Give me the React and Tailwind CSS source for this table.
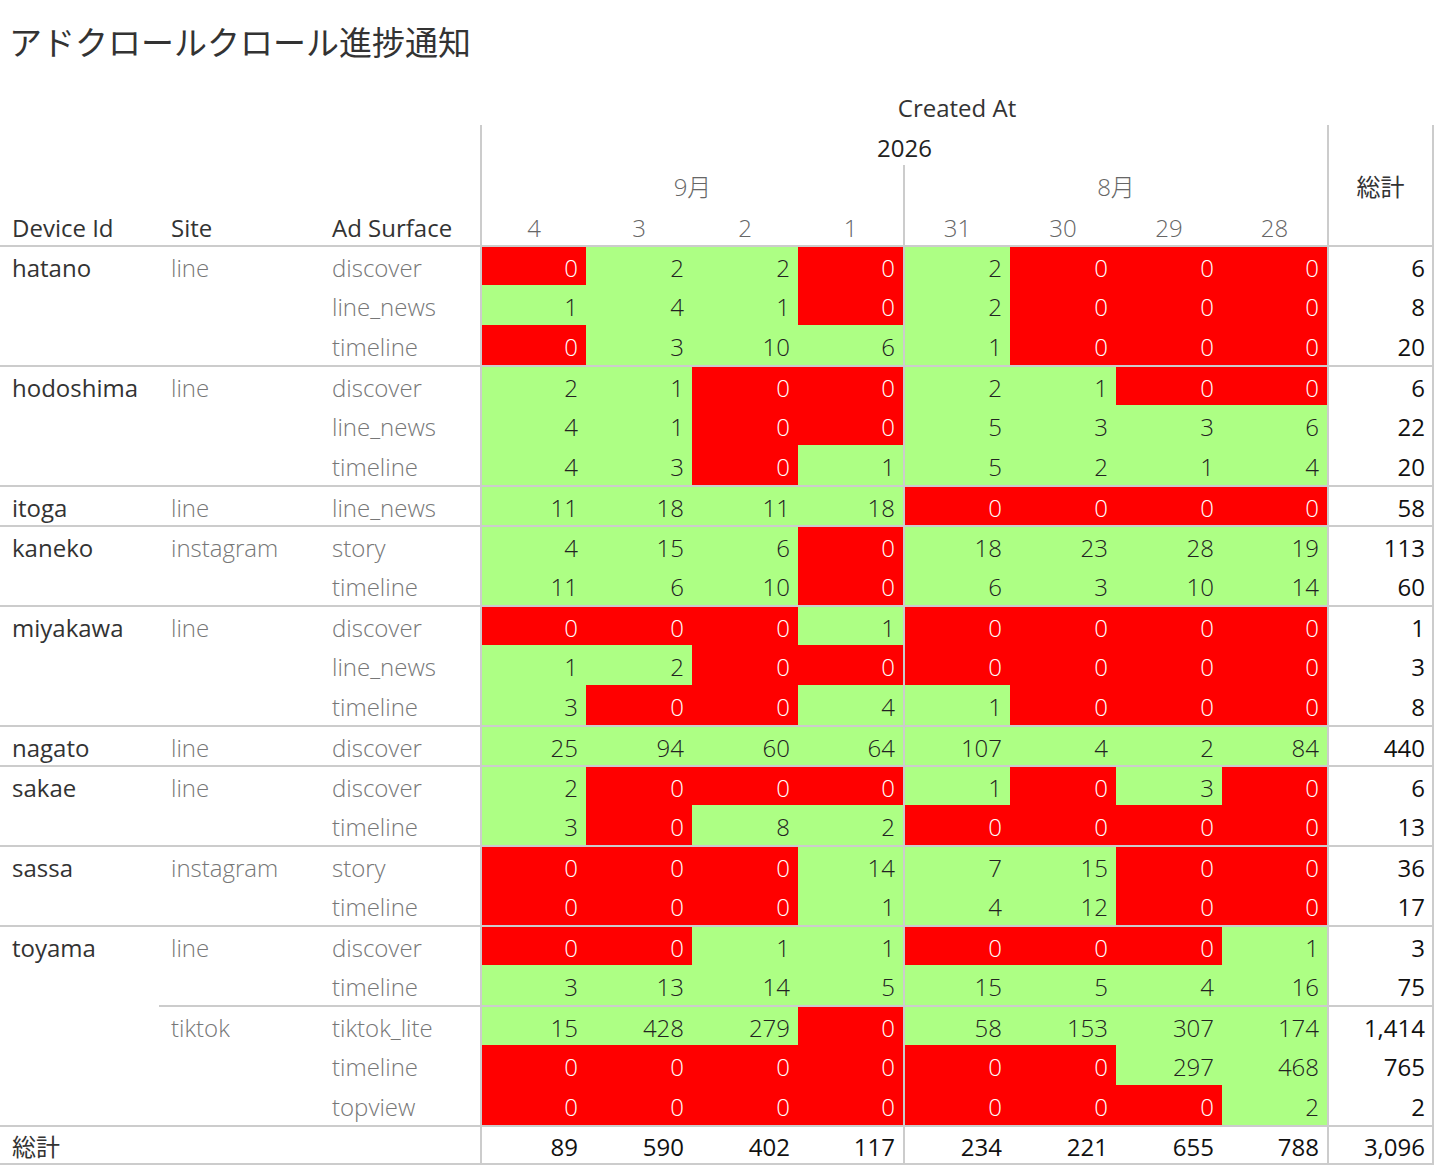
import React from "react";

const groups = [
  { device: "hatano", sites: [{ site: "line", rows: [
    ["discover", [0, 2, 2, 0, 2, 0, 0, 0], "6"],
    ["line_news", [1, 4, 1, 0, 2, 0, 0, 0], "8"],
    ["timeline", [0, 3, 10, 6, 1, 0, 0, 0], "20"],
  ] }] },
  { device: "hodoshima", sites: [{ site: "line", rows: [
    ["discover", [2, 1, 0, 0, 2, 1, 0, 0], "6"],
    ["line_news", [4, 1, 0, 0, 5, 3, 3, 6], "22"],
    ["timeline", [4, 3, 0, 1, 5, 2, 1, 4], "20"],
  ] }] },
  { device: "itoga", sites: [{ site: "line", rows: [
    ["line_news", [11, 18, 11, 18, 0, 0, 0, 0], "58"],
  ] }] },
  { device: "kaneko", sites: [{ site: "instagram", rows: [
    ["story", [4, 15, 6, 0, 18, 23, 28, 19], "113"],
    ["timeline", [11, 6, 10, 0, 6, 3, 10, 14], "60"],
  ] }] },
  { device: "miyakawa", sites: [{ site: "line", rows: [
    ["discover", [0, 0, 0, 1, 0, 0, 0, 0], "1"],
    ["line_news", [1, 2, 0, 0, 0, 0, 0, 0], "3"],
    ["timeline", [3, 0, 0, 4, 1, 0, 0, 0], "8"],
  ] }] },
  { device: "nagato", sites: [{ site: "line", rows: [
    ["discover", [25, 94, 60, 64, 107, 4, 2, 84], "440"],
  ] }] },
  { device: "sakae", sites: [{ site: "line", rows: [
    ["discover", [2, 0, 0, 0, 1, 0, 3, 0], "6"],
    ["timeline", [3, 0, 8, 2, 0, 0, 0, 0], "13"],
  ] }] },
  { device: "sassa", sites: [{ site: "instagram", rows: [
    ["story", [0, 0, 0, 14, 7, 15, 0, 0], "36"],
    ["timeline", [0, 0, 0, 1, 4, 12, 0, 0], "17"],
  ] }] },
  { device: "toyama", sites: [
    { site: "line", rows: [
      ["discover", [0, 0, 1, 1, 0, 0, 0, 1], "3"],
      ["timeline", [3, 13, 14, 5, 15, 5, 4, 16], "75"],
    ] },
    { site: "tiktok", rows: [
      ["tiktok_lite", [15, 428, 279, 0, 58, 153, 307, 174], "1,414"],
      ["timeline", [0, 0, 0, 0, 0, 0, 297, 468], "765"],
      ["topview", [0, 0, 0, 0, 0, 0, 0, 2], "2"],
    ] },
  ] },
];

const days = ["4", "3", "2", "1", "31", "30", "29", "28"];
const totals = ["89", "590", "402", "117", "234", "221", "655", "788"];

// vertical separators: before first data col, before 8月
const dataBorder = (i) => (i === 0 || i === 4 ? "border-l-2" : "");

function buildRows() {
  const out = [];
  groups.forEach((g) => {
    g.sites.forEach((s, si) => {
      s.rows.forEach((r, ri) => {
        out.push({
          device: si === 0 && ri === 0 ? g.device : "",
          site: ri === 0 ? s.site : "",
          surface: r[0],
          values: r[1],
          total: r[2],
          groupStart: si === 0 && ri === 0,
          subStart: si > 0 && ri === 0,
        });
      });
    });
  });
  return out;
}

export default function App() {
  const rows = buildRows();

  return (
    <div className="w-[1438px] bg-white text-[24px] font-['Open_Sans','Noto_Sans_CJK_JP',sans-serif] text-[#333]">
      <div className="h-[85px] pl-[9px] pb-[2px] flex items-center text-[33px] text-[#333] font-['Noto_Sans_CJK_JP',sans-serif]">
        アドクロールクロール進捗通知
      </div>

      <div className="grid grid-cols-[159px_161px_160px_106px_106px_106px_105px_107px_106px_106px_105px_107px] auto-rows-[40px] leading-none">
        {/* header row 1 */}
        <div className="col-start-4 col-span-9 flex items-center justify-center pt-[6px] text-[#333]">
          Created At
        </div>

        {/* header row 2 */}
        <div className="col-start-4 col-span-8 border-l-2 border-[#cccccc] flex items-center justify-center pt-[6px] text-[#222]">
          2026
        </div>
        <div className="col-start-12 row-span-3 border-l-2 border-r-2 border-[#cccccc] flex items-center justify-center pt-[4px] text-[#333]">
          総計
        </div>

        {/* header row 3 */}
        <div className="col-start-4 col-span-4 border-l-2 border-[#cccccc] flex items-center justify-center pt-[4px] font-light text-[#666]">
          9月
        </div>
        <div className="col-start-8 col-span-4 border-l-2 border-[#cccccc] flex items-center justify-center pt-[4px] font-light text-[#666]">
          8月
        </div>

        {/* header row 4 */}
        <div className="col-start-1 flex items-center pl-[12px] pt-[6px] font-medium text-[#333]">Device Id</div>
        <div className="flex items-center pl-[12px] pt-[6px] font-medium text-[#333]">Site</div>
        <div className="flex items-center pl-[12px] pt-[6px] font-medium text-[#333]">Ad Surface</div>
        {days.map((d, i) => (
          <div
            key={d}
            className={`${dataBorder(i)} border-[#cccccc] flex items-center justify-center pt-[6px] font-light text-[#666]`}
          >
            {d}
          </div>
        ))}

        {/* data rows */}
        {rows.map((r, ri) => {
          const top = r.groupStart || r.subStart ? "border-t-2" : "";
          const topLabel = r.groupStart ? "border-t-2" : "";
          return (
            <React.Fragment key={ri}>
              <div className={`col-start-1 ${topLabel} border-[#cccccc] flex items-center pl-[12px] pt-[3px] text-[#333]`}>
                {r.device}
              </div>
              <div className={`${top} border-[#cccccc] flex items-center pl-[12px] pt-[3px] font-light text-[#777]`}>
                {r.site}
              </div>
              <div className={`${top} border-[#cccccc] flex items-center pl-[12px] pt-[3px] font-light text-[#777]`}>
                {r.surface}
              </div>
              {r.values.map((v, i) => (
                <div
                  key={i}
                  className={`${top} ${dataBorder(i)} border-[#cccccc] flex items-center justify-end pr-[8px] pt-[3px] font-light ${
                    v === 0 ? "bg-[#ff0000] text-white" : "bg-[#adff84] text-[#222]"
                  }`}
                >
                  {v}
                </div>
              ))}
              <div className={`${top} border-l-2 border-r-2 border-[#cccccc] flex items-center justify-end pr-[7px] pt-[3px] text-[#111]`}>
                {r.total}
              </div>
            </React.Fragment>
          );
        })}

        {/* grand total */}
        <div className="col-start-1 col-span-3 border-t-2 border-b-2 border-[#cccccc] flex items-center pl-[12px] pt-[3px] text-[#333]">
          総計
        </div>
        {totals.map((t, i) => (
          <div
            key={i}
            className={`border-t-2 border-b-2 ${dataBorder(i)} border-[#cccccc] flex items-center justify-end pr-[8px] pt-[3px] text-[#111]`}
          >
            {t}
          </div>
        ))}
        <div className="border-t-2 border-b-2 border-l-2 border-r-2 border-[#cccccc] flex items-center justify-end pr-[7px] pt-[3px] text-[#111]">
          3,096
        </div>
      </div>
    </div>
  );
}
